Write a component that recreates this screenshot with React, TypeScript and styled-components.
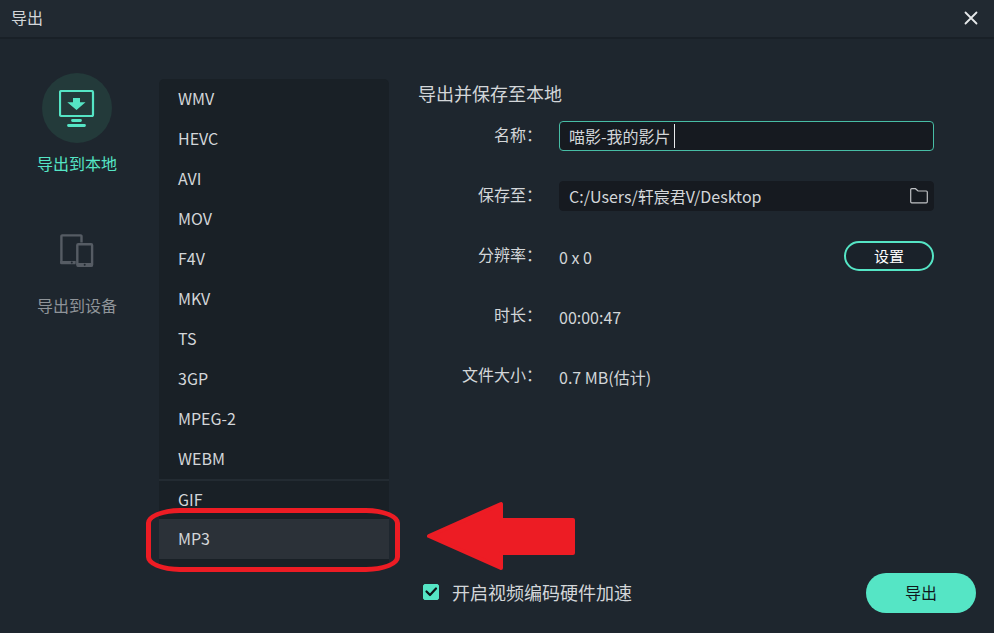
import React, { useState } from 'react';
import styled, { createGlobalStyle, css } from 'styled-components';

const accent = '#55e5c5';
const marker = '#ed1c24';

const GlobalStyle = createGlobalStyle`
  * { box-sizing: border-box; }
  body {
    margin: 0;
    background: #1e262e;
    color: #d3d6d9;
    font-family: "Noto Sans CJK SC", "Noto Sans", sans-serif;
    font-size: 16px;
    line-height: 24px;
  }
  button, input { font: inherit; color: inherit; }
`;

const Dialog = styled.main`
  display: flex;
  flex-direction: column;
  min-height: 100vh;
`;

const TitleBar = styled.header`
  display: flex;
  align-items: center;
  justify-content: space-between;
  height: 39px;
  padding: 0 11px 2px;
  background: #212931;
  border-bottom: 2px solid #192027;
`;

const WindowTitle = styled.h1`
  margin: 0;
  padding-bottom: 2px;
  font-size: 16px;
  font-weight: 400;
`;

const IconButton = styled.button`
  display: flex;
  align-items: center;
  justify-content: center;
  width: 24px;
  height: 24px;
  padding: 0;
  border: 0;
  background: none;
  cursor: pointer;
`;

const Body = styled.div`
  display: flex;
  flex: 1;
`;

const Sidebar = styled.nav`
  display: flex;
  flex-direction: column;
  align-items: center;
  gap: 40px;
  width: 154px;
  padding-top: 34px;
`;

const Target = styled.button<{ $active?: boolean }>`
  display: flex;
  flex-direction: column;
  align-items: center;
  gap: 8px;
  padding: 0;
  border: 0;
  background: none;
  color: ${(p) => (p.$active ? accent : '#8f9499')};
  cursor: pointer;
`;

const TargetIcon = styled.span<{ $active?: boolean }>`
  display: flex;
  align-items: center;
  justify-content: center;
  width: 70px;
  height: 70px;
  padding: 2px 0 0 1px;
  border-radius: 50%;
  background: ${(p) => (p.$active ? '#233a3a' : 'transparent')};
`;

const FormatList = styled.ul`
  align-self: flex-start;
  width: 230px;
  margin: 40px 29px 0 5px;
  padding: 0 0 9px;
  border-radius: 5px;
  background: #192026;
  list-style: none;
`;

const FormatItem = styled.li<{ $divided?: boolean }>`
  position: relative;
  height: 40px;
  ${(p) => p.$divided && css`border-top: 2px solid #232b32;`}
`;

const FormatButton = styled.button<{ $selected?: boolean }>`
  display: block;
  width: 100%;
  height: 100%;
  padding: 0 19px 2px;
  border: 0;
  background: ${(p) => (p.$selected ? '#2b3138' : 'transparent')};
  text-align: left;
  cursor: pointer;
`;

const Ring = styled.span`
  position: absolute;
  inset: -11px -11px -13px -13px;
  border: 5px solid ${marker};
  border-radius: 34px / 15px;
  pointer-events: none;
`;

const Arrow = styled.svg`
  position: absolute;
  left: 268px;
  top: -18px;
  pointer-events: none;
`;

const Content = styled.section`
  display: flex;
  flex: 1;
  flex-direction: column;
  justify-content: space-between;
  min-width: 0;
  padding: 42px 18px 20px 0;
`;

const Form = styled.form`
  display: flex;
  flex-direction: column;
  gap: 30px;
  padding-right: 42px;
`;

const FormTitle = styled.h2`
  margin: 0 0 -14px;
  font-size: 18px;
  font-weight: 400;
  line-height: 24px;
`;

const Row = styled.div`
  display: grid;
  grid-template-columns: 124px 1fr auto;
  column-gap: 17px;
  height: 30px;
`;

const Label = styled.label`
  line-height: 26px;
  text-align: right;
`;

const Value = styled.output`
  line-height: 32px;
`;

const Field = styled.div<{ $focused?: boolean }>`
  display: flex;
  align-items: center;
  grid-column: 2 / -1;
  padding: 0 2px 0 9px;
  border: 1px solid ${(p) => (p.$focused ? '#47bda5' : '#161a20')};
  border-radius: 4px;
  background: #161a20;
`;

const NameInput = styled.input`
  field-sizing: content;
  height: 24px;
  padding: 0;
  border: 0;
  outline: 0;
  background: none;
  caret-color: transparent;
`;

const Caret = styled.span`
  width: 1px;
  height: 24px;
  margin-left: 3px;
  background: #e8eaec;
`;

const PathInput = styled.input`
  flex: 1;
  min-width: 0;
  height: 24px;
  padding: 0;
  border: 0;
  outline: 0;
  background: none;
`;

const SettingsButton = styled.button`
  width: 90px;
  height: 30px;
  padding: 0;
  border: 2px solid ${accent};
  border-radius: 15px;
  background: #1a222a;
  color: #fff;
  font-size: 15px;
  line-height: 24px;
  cursor: pointer;
`;

const Footer = styled.footer`
  display: flex;
  align-items: center;
  justify-content: space-between;
`;

const CheckLabel = styled.label`
  display: flex;
  align-items: center;
  gap: 13px;
  padding: 0 0 2px 5px;
  font-size: 18px;
`;

const CheckBox = styled.span`
  display: grid;
  width: 16px;
  height: 16px;

  > * { grid-area: 1 / 1; }
  svg { pointer-events: none; }
`;

const CheckInput = styled.input`
  appearance: none;
  width: 16px;
  height: 16px;
  margin: 0;
  border: 1px solid ${accent};
  border-radius: 2px;

  &:checked { background: ${accent}; }
`;

const ExportButton = styled.button`
  width: 110px;
  height: 40px;
  padding: 0 0 2px;
  border: 0;
  border-radius: 20px;
  background: ${accent};
  color: #10181c;
  cursor: pointer;
`;

const MonitorIcon = () => (
  <svg width="36" height="38" viewBox="0 0 36 38" fill="none" aria-hidden="true">
    <rect x="1" y="1" width="33" height="25" rx="1.5" stroke={accent} strokeWidth="2.2" />
    <path d="M14 8h7v4.2h5.5L17.5 20 8.300 12.200H14z" fill={accent} />
    <path d="M13.500 30.500h8M9.500 35.500h16" stroke={accent} strokeWidth="2.800" strokeLinecap="round" />
  </svg>
);

const DevicesIcon = () => (
  <svg width="34" height="34" viewBox="0 0 34 34" fill="none" aria-hidden="true">
    <path d="M21.500 8.500V2.200a.8.8 0 0 0-.8-.8H2.200a.8.8 0 0 0-.8.8v26h14" stroke="#565c64" strokeWidth="2.400" />
    <path d="M.2 27h15.300v3.200H1.500a1.300 1.300 0 0 1-1.300-1.300z" fill="#565c64" />
    <rect x="17.300" y="10.200" width="14.800" height="21.500" rx="1" stroke="#565c64" strokeWidth="2.400" />
    <path d="M17 29h15.500v3.500H17z" fill="#565c64" />
    <circle cx="11.800" cy="28.500" r="1" fill="#1e262e" />
    <circle cx="24.700" cy="30.700" r="1" fill="#1e262e" />
  </svg>
);

const CloseIcon = () => (
  <svg width="14" height="14" viewBox="0 0 14 14" aria-hidden="true">
    <path d="M1.500 1.500l11 11M12.500 1.500l-11 11" stroke="#e6e8ea" strokeWidth="1.800" strokeLinecap="round" />
  </svg>
);

const FolderIcon = () => (
  <svg width="18" height="16" viewBox="0 0 18 16" fill="none" aria-hidden="true">
    <path d="M.7 13.800V1.700a1 1 0 0 1 1-1h3.800L8 3h8.300a1 1 0 0 1 1 1v9.800a1 1 0 0 1-1 1H1.700a1 1 0 0 1-1-1z" stroke="#bfc1c4" strokeWidth="1.200" />
  </svg>
);

const formats = ['WMV', 'HEVC', 'AVI', 'MOV', 'F4V', 'MKV', 'TS', '3GP', 'MPEG-2', 'WEBM', 'GIF', 'MP3'];

export default function App() {
  const [selected, setSelected] = useState('MP3');
  const [name, setName] = useState('喵影-我的影片');
  const [accelerated, setAccelerated] = useState(true);

  return (
    <Dialog>
      <GlobalStyle />
      <TitleBar>
        <WindowTitle>导出</WindowTitle>
        <IconButton type="button" aria-label="关闭"><CloseIcon /></IconButton>
      </TitleBar>
      <Body>
        <Sidebar>
          <Target type="button" $active>
            <TargetIcon $active><MonitorIcon /></TargetIcon>
            导出到本地
          </Target>
          <Target type="button">
            <TargetIcon><DevicesIcon /></TargetIcon>
            导出到设备
          </Target>
        </Sidebar>
        <FormatList>
          {formats.map((format) => (
            <FormatItem key={format} $divided={format === 'GIF'}>
              <FormatButton type="button" $selected={format === selected} onClick={() => setSelected(format)}>
                {format}
              </FormatButton>
              {format === 'MP3' && (
                <>
                  <Ring />
                  <Arrow width="149" height="70" viewBox="0 0 149 70" aria-hidden="true">
                    <path
                      d="M2 35L74 3V19H146V52H74V67z"
                      fill={marker}
                      stroke={marker}
                      strokeWidth="4"
                      strokeLinejoin="round"
                    />
                  </Arrow>
                </>
              )}
            </FormatItem>
          ))}
        </FormatList>
        <Content>
          <Form onSubmit={(e) => e.preventDefault()}>
            <FormTitle>导出并保存至本地</FormTitle>
            <Row>
              <Label htmlFor="name">名称：</Label>
              <Field $focused>
                <NameInput id="name" value={name} onChange={(e) => setName(e.target.value)} />
                <Caret />
              </Field>
            </Row>
            <Row>
              <Label htmlFor="path">保存至：</Label>
              <Field>
                <PathInput id="path" readOnly value="C:/Users/轩宸君V/Desktop" />
                <IconButton type="button" aria-label="选择文件夹"><FolderIcon /></IconButton>
              </Field>
            </Row>
            <Row>
              <Label htmlFor="resolution">分辨率：</Label>
              <Value id="resolution">0 x 0</Value>
              <SettingsButton type="button">设置</SettingsButton>
            </Row>
            <Row>
              <Label htmlFor="duration">时长：</Label>
              <Value id="duration">00:00:47</Value>
            </Row>
            <Row>
              <Label htmlFor="size">文件大小：</Label>
              <Value id="size">0.7 MB(估计)</Value>
            </Row>
          </Form>
          <Footer>
            <CheckLabel htmlFor="acceleration">
              <CheckBox>
                <CheckInput
                  id="acceleration"
                  type="checkbox"
                  checked={accelerated}
                  onChange={(e) => setAccelerated(e.target.checked)}
                />
                {accelerated && (
                  <svg width="16" height="16" viewBox="0 0 16 16" fill="none" aria-hidden="true">
                    <path d="M3.500 7.500L7 11l6-6.500" stroke="#0c1417" strokeWidth="2.200" strokeLinecap="round" strokeLinejoin="round" />
                  </svg>
                )}
              </CheckBox>
              开启视频编码硬件加速
            </CheckLabel>
            <ExportButton type="button">导出</ExportButton>
          </Footer>
        </Content>
      </Body>
    </Dialog>
  );
}
